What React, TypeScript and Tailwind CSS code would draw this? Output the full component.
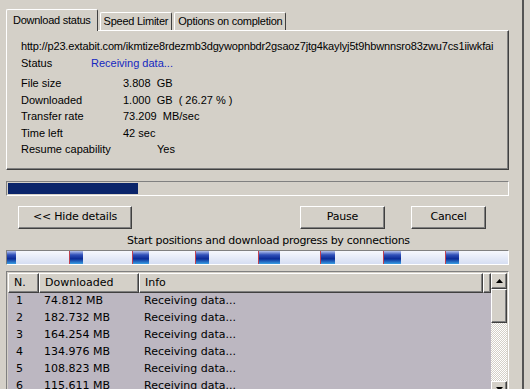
import React from "react";

const raised =
  "border border-t-white border-l-white border-r-[#404040] border-b-[#404040] shadow-[inset_-1px_-1px_0_#808080]";
const sunken =
  "border border-t-[#808080] border-l-[#808080] border-r-white border-b-white";

const rows = [
  ["1", "74.812  MB"],
  ["2", "182.732  MB"],
  ["3", "164.254  MB"],
  ["4", "134.976  MB"],
  ["5", "108.823  MB"],
  ["6", "115.611  MB"],
];

// connection start positions (x, width) inside the bar
const marks = [
  [0, 9],
  [62, 14],
  [125, 17],
  [188, 14],
  [251, 22],
  [313, 15],
  [376, 18],
  [438, 14],
];

function ConnBar() {
  return (
    <svg width="501" height="13" className="block">
      <defs>
        <linearGradient id="bg" x1="0" y1="0" x2="0" y2="1">
          <stop offset="0" stopColor="#f6f8fd" />
          <stop offset="1" stopColor="#d6def2" />
        </linearGradient>
        <linearGradient id="mk" x1="0" y1="0" x2="0" y2="1">
          <stop offset="0" stopColor="#b4c2ee" />
          <stop offset="0.3" stopColor="#3050b8" />
          <stop offset="0.6" stopColor="#0b2a96" />
          <stop offset="1" stopColor="#3aa0e4" />
        </linearGradient>
      </defs>
      <rect width="501" height="13" fill="url(#bg)" />
      {marks.map(([x, w]) => (
        <g key={x}>
          <rect x={x} y="0" width={w} height="13" fill="url(#mk)" />
          {x > 0 && <rect x={x} y="0" width="1" height="13" fill="#c04050" />}
        </g>
      ))}
    </svg>
  );
}

function Row({ label, children, pad = "" }: { label: string; children: React.ReactNode; pad?: string }) {
  return (
    <div className="flex h-[16.5px] items-center">
      <span className="w-[102px] shrink-0">{label}</span>
      <span className={pad}>{children}</span>
    </div>
  );
}

const tahoma = { fontFamily: '"DejaVu Sans", Tahoma, sans-serif' };
const tab =
  "flex h-[18px] items-center rounded-t-[2px] border border-b-0 border-l-white border-t-white border-r-[#404040] px-[3px] tracking-[-0.25px]";

export default function App() {
  return (
    <div
      className="flex h-[389px] w-[530px] overflow-hidden bg-[#d4d0c8] text-[11px] text-black"
      style={{ fontFamily: '"Liberation Sans", Arial, sans-serif' }}
    >
      <div className="flex w-[524px] shrink-0 flex-col border-r-2 border-r-[#555] pl-[6px] pr-[13px]">
        {/* tabs */}
        <div className="mt-[9px] flex h-[21px] shrink-0 items-end gap-[2px]">
          <div className="relative z-10 -mb-[1px] flex h-[22px] items-center rounded-t-[2px] border border-b-0 border-l-white border-t-white border-r-[#404040] bg-[#d4d0c8] px-[6px] tracking-[-0.25px]">
            Download status
          </div>
          <div className={tab}>Speed Limiter</div>
          <div className={tab}>Options on completion</div>
        </div>

        <div className={`${raised} h-[140px] shrink-0 pl-[14px] pt-[7px]`}>
          <div className="flex h-[16.5px] items-center whitespace-nowrap tracking-[-0.15px]">
            http://p23.extabit.com/ikmtize8rdezmb3dgywopnbdr2gsaoz7jtg4kaylyj5t9hbwnnsro83zwu7cs1iiwkfai
          </div>
          <div className="flex h-[16.5px] items-center">
            <span className="w-[70px]">Status</span>
            <span className="text-[#1428c0]">Receiving data...</span>
          </div>
          <div className="mt-[4px]">
            <Row label="File size">3.808&nbsp;&nbsp;GB</Row>
            <Row label="Downloaded">1.000&nbsp;&nbsp;GB&nbsp;&nbsp;( 26.27 % )</Row>
            <Row label="Transfer rate">73.209&nbsp;&nbsp;MB/sec</Row>
            <Row label="Time left">42 sec</Row>
            <Row label="Resume capability" pad="pl-[34px]">
              Yes
            </Row>
          </div>
        </div>

        {/* overall progress */}
        <div className={`${sunken} mt-[11px] h-[15px] shrink-0 p-[1px]`}>
          <div className="h-full w-[130px] bg-[#0a246a]" />
        </div>

        {/* buttons */}
        <div className="mt-[10px] flex h-[23px] shrink-0 text-[11px]" style={tahoma}>
          <button className={`${raised} ml-[12px] w-[114px] bg-[#d4d0c8] tracking-[-0.2px]`}>&lt;&lt; Hide details</button>
          <button className={`${raised} ml-[168px] w-[85px] bg-[#d4d0c8] tracking-[-0.2px]`}>Pause</button>
          <button className={`${raised} ml-[26px] w-[75px] bg-[#d4d0c8] tracking-[-0.2px]`}>Cancel</button>
        </div>

        <div className="mt-[5px] h-[13px] shrink-0 pl-[121px] text-[11px] leading-[13px] tracking-[-0.3px]" style={tahoma}>
          Start positions and download progress by connections
        </div>

        <div className={`${sunken} mt-[3px] h-[15px] shrink-0`}>
          <ConnBar />
        </div>

        {/* connections table */}
        <div className={`${sunken} mt-[6px] flex flex-1 border-b-0 p-[1px]`}>
          <div className="flex min-w-0 flex-1 flex-col" style={tahoma}>
            <div className="flex h-[20px] shrink-0 text-[11px]">
              <div className={`${raised} flex w-[31px] items-center pl-[5px]`}>N.</div>
              <div className={`${raised} flex w-[100px] items-center pl-[5px]`}>Downloaded</div>
              <div className={`${raised} flex flex-1 items-center pl-[5px]`}>Info</div>
              <div className={`${raised} w-[8px]`} />
            </div>
            <div className="flex-1 bg-[#bcb7c1] text-[11px]">
              {rows.map(([n, d]) => (
                <div key={n} className="flex h-[17px] items-center">
                  <span className="w-[31px] pl-[8px]">{n}</span>
                  <span className="w-[100px] pl-[5px]">{d}</span>
                  <span className="pl-[5px]">Receiving data...</span>
                </div>
              ))}
            </div>
          </div>
          <div className="flex w-[16px] flex-col">
            <div className={`${raised} flex h-[16px] shrink-0 items-center justify-center bg-[#d4d0c8]`}>
              <svg width="7" height="4" viewBox="0 0 7 4">
                <path d="M3.5 0 L7 4 L0 4 Z" fill="#000" />
              </svg>
            </div>
            <div className={`${raised} h-[34px] shrink-0 bg-[#d4d0c8]`} />
            <div className="h-[58px] shrink-0 bg-[repeating-conic-gradient(#d4d0c8_0_25%,#ffffff_0_50%)] bg-[length:2px_2px]" />
            <div className={`${raised} flex h-[16px] shrink-0 items-center justify-center bg-[#d4d0c8]`}>
              <svg width="7" height="4" viewBox="0 0 7 4">
                <path d="M0 0 L7 0 L3.5 4 Z" fill="#000" />
              </svg>
            </div>
          </div>
        </div>
      </div>
      <div className="flex-1" />
    </div>
  );
}
